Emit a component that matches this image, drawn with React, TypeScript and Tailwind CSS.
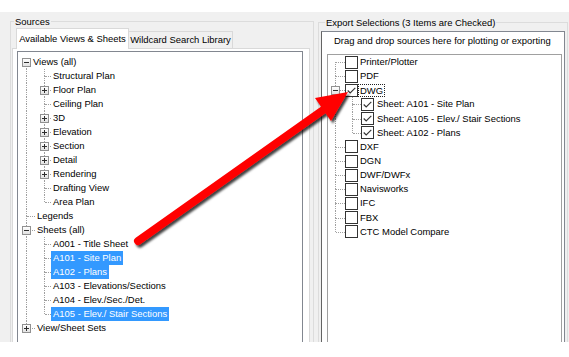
import React from "react";

type LRow = {
  t: string;
  lvl: 0 | 1;
  exp?: "p" | "m";
  sel?: boolean;
  root: "b" | "f" | "t";
  child?: "f" | "t";
  first?: boolean;
};

const LEFT: LRow[] = [
  { t: "Views (all)", lvl: 0, exp: "m", root: "b", first: true },
  { t: "Structural Plan", lvl: 1, root: "f", child: "f" },
  { t: "Floor Plan", lvl: 1, exp: "p", root: "f", child: "f" },
  { t: "Ceiling Plan", lvl: 1, root: "f", child: "f" },
  { t: "3D", lvl: 1, exp: "p", root: "f", child: "f" },
  { t: "Elevation", lvl: 1, exp: "p", root: "f", child: "f" },
  { t: "Section", lvl: 1, exp: "p", root: "f", child: "f" },
  { t: "Detail", lvl: 1, exp: "p", root: "f", child: "f" },
  { t: "Rendering", lvl: 1, exp: "p", root: "f", child: "f" },
  { t: "Drafting View", lvl: 1, root: "f", child: "f" },
  { t: "Area Plan", lvl: 1, root: "f", child: "t" },
  { t: "Legends", lvl: 0, root: "f" },
  { t: "Sheets (all)", lvl: 0, exp: "m", root: "f" },
  { t: "A001 - Title Sheet", lvl: 1, root: "f", child: "f" },
  { t: "A101 - Site Plan", lvl: 1, root: "f", child: "f", sel: true },
  { t: "A102 - Plans", lvl: 1, root: "f", child: "f", sel: true },
  { t: "A103 - Elevations/Sections", lvl: 1, root: "f", child: "f" },
  { t: "A104 - Elev./Sec./Det.", lvl: 1, root: "f", child: "f" },
  { t: "A105 - Elev./ Stair Sections", lvl: 1, root: "f", child: "t", sel: true },
  { t: "View/Sheet Sets", lvl: 0, exp: "p", root: "t" },
];

type RRow = {
  t: string;
  lvl: 0 | 1;
  exp?: boolean;
  checked?: boolean;
  focus?: boolean;
  root: "b" | "f" | "t";
  child?: "f" | "t";
};

const RIGHT: RRow[] = [
  { t: "Printer/Plotter", lvl: 0, root: "b" },
  { t: "PDF", lvl: 0, root: "f" },
  { t: "DWG", lvl: 0, root: "f", exp: true, checked: true, focus: true },
  { t: "Sheet: A101 - Site Plan", lvl: 1, root: "f", child: "f", checked: true },
  { t: "Sheet: A105 - Elev./ Stair Sections", lvl: 1, root: "f", child: "f", checked: true },
  { t: "Sheet: A102 - Plans", lvl: 1, root: "f", child: "t", checked: true },
  { t: "DXF", lvl: 0, root: "f" },
  { t: "DGN", lvl: 0, root: "f" },
  { t: "DWF/DWFx", lvl: 0, root: "f" },
  { t: "Navisworks", lvl: 0, root: "f" },
  { t: "IFC", lvl: 0, root: "f" },
  { t: "FBX", lvl: 0, root: "f" },
  { t: "CTC Model Compare", lvl: 0, root: "t" },
];

const DOT = "border-dotted border-[#a0a0a0]";

function ExpBox({ plus }: { plus?: boolean }) {
  return (
    <span className="flex h-[9px] w-[9px] flex-col items-center justify-center border border-[#919191] bg-gradient-to-b from-[#ffffff] to-[#e2e2e2]">
      <span className="grid">
        <span className="[grid-area:1/1] h-px w-[5px] self-center bg-[#2e2e2e]" />
        {plus && <span className="[grid-area:1/1] h-[5px] w-px justify-self-center bg-[#2e2e2e]" />}
      </span>
    </span>
  );
}

/* One column of tree connector lines, laid out in flow: the vertical line is the
   right border of a fixed-width spacer, the horizontal line is the top border of
   the remaining space in the lower half. An expander box sits on the crossing. */
function Gutter({
  wCls,
  leftCls,
  up,
  down,
  horiz,
  exp,
  plus,
  boxCls,
}: {
  wCls: string;
  leftCls: string;
  up: boolean;
  down: boolean;
  horiz?: boolean;
  exp?: boolean;
  plus?: boolean;
  boxCls?: string;
}) {
  return (
    <div className={`grid h-full shrink-0 ${wCls}`}>
      <div className="[grid-area:1/1] flex flex-col">
        <div className="flex h-1/2">
          <div className={`h-full shrink-0 ${leftCls} ${up ? `border-r ${DOT}` : ""}`} />
        </div>
        <div className="flex h-1/2">
          <div className={`h-full shrink-0 ${leftCls} ${down ? `border-r ${DOT}` : ""}`} />
          {horiz && <div className={`flex-1 border-t ${DOT}`} />}
        </div>
      </div>
      {exp && (
        <div className={`[grid-area:1/1] self-center ${boxCls ?? ""}`}>
          <ExpBox plus={plus} />
        </div>
      )}
    </div>
  );
}

function Cb({ checked }: { checked?: boolean }) {
  return (
    <span className="flex h-[13px] w-[13px] shrink-0 items-center justify-center border border-[#333333] bg-white">
      {checked && (
        <svg width="11" height="11" viewBox="0 0 11 11">
          <path d="M1.7 5.5 L4.2 8 L9.3 2.8" fill="none" stroke="#333333" strokeWidth="1.1" />
        </svg>
      )}
    </span>
  );
}

function LeftTreeRow({ r }: { r: LRow }) {
  return (
    <div className="flex h-[14px] items-center whitespace-nowrap">
      {r.lvl === 0 ? (
        <Gutter
          wCls={r.first ? "w-[13px]" : "w-[17px]"}
          leftCls="w-[9px]"
          up={r.root !== "b"}
          down={r.root !== "t"}
          horiz
          exp={!!r.exp}
          plus={r.exp === "p"}
          boxCls="ml-[4px]"
        />
      ) : (
        <>
          <Gutter wCls="w-[17px]" leftCls="w-[9px]" up down />
          <Gutter
            wCls="w-[16px]"
            leftCls="w-[10px]"
            up
            down={r.child === "f"}
            horiz
            exp={!!r.exp}
            plus={r.exp === "p"}
            boxCls="ml-[5px]"
          />
        </>
      )}
      <span
        className={`flex h-full items-center px-[2px] ${r.sel ? "bg-[#3399ff] text-white" : "text-black"}`}
      >
        {r.t}
      </span>
    </div>
  );
}

function RightTreeRow({ r }: { r: RRow }) {
  return (
    <div className="flex h-[14.15px] items-center whitespace-nowrap">
      {r.lvl === 0 ? (
        <Gutter
          wCls="w-[17px]"
          leftCls="w-[8px]"
          up={r.root !== "b"}
          down={r.root !== "t"}
          horiz
          exp={r.exp}
          plus={false}
          boxCls="ml-[3px]"
        />
      ) : (
        <>
          <Gutter wCls="w-[17px]" leftCls="w-[8px]" up down />
          <Gutter wCls="w-[16px]" leftCls="w-[8px]" up down={r.child === "f"} horiz />
        </>
      )}
      <Cb checked={r.checked} />
      {r.focus ? (
        <span className="border border-dotted border-[#222222] px-[1px] leading-[11px]">{r.t}</span>
      ) : (
        <span className={r.lvl === 0 ? "ml-[2px]" : "ml-[3px]"}>{r.t}</span>
      )}
    </div>
  );
}

function Arrow() {
  return (
    <svg className="pointer-events-none absolute left-0 top-0" width="569" height="357" viewBox="0 0 569 357">
      <defs>
        <filter id="sh" x="-20%" y="-20%" width="140%" height="140%">
          <feDropShadow dx="2" dy="2.5" stdDeviation="1.3" floodColor="#000000" floodOpacity="0.75" />
        </filter>
      </defs>
      <g filter="url(#sh)">
        <line x1="138" y1="241" x2="326" y2="108" stroke="#ff0000" strokeWidth="8" strokeLinecap="round" />
        <polygon points="348,92 315,98 331,121" fill="#ff0000" />
      </g>
    </svg>
  );
}

export default function App() {
  return (
    <div className="relative h-[357px] w-[569px] overflow-hidden bg-white font-['Liberation_Sans',Arial,sans-serif] text-[9.45px] text-black">
      <div className="mt-[12px] flex h-[330px] items-start overflow-hidden bg-[#f0f0f0]">
        {/* Sources group */}
        <fieldset className="ml-[10px] mt-[3px] h-[400px] w-[304px] shrink-0 border border-b-0 border-[#dcdcdc]">
          <legend className="ml-[3px] px-[1px] leading-[13px]">Sources</legend>
          <div className="ml-[1px] w-[298px]">
            <div className="flex h-[20px] items-end pl-[4px]">
              <div className="relative z-10 -mb-px flex h-[21px] w-[113px] items-center justify-center whitespace-nowrap border border-b-0 border-[#d9d9d9] bg-white">
                Available Views &amp; Sheets
              </div>
              <div className="flex h-[17px] w-[104px] items-center justify-center whitespace-nowrap border-r border-t border-[#d9d9d9] bg-[#f0f0f0]">
                Wildcard Search Library
              </div>
            </div>
            <div className="h-[320px] border border-[#d9d9d9] bg-white pl-[4px] pr-[6px] pt-[2px]">
              <div className="flex h-[320px] flex-col border border-[#828790] bg-white pt-[3px]">
                {LEFT.map((r, i) => (
                  <LeftTreeRow key={i} r={r} />
                ))}
              </div>
            </div>
          </div>
        </fieldset>

        {/* Export Selections group */}
        <fieldset className="ml-[4px] mt-[4px] h-[400px] w-[250px] shrink-0 border border-b-0 border-[#dcdcdc]">
          <legend className="ml-[6px] whitespace-nowrap px-[1px] leading-[13px]">
            Export Selections (3 Items are Checked)
          </legend>
          <div className="ml-[2px] mt-[2px] h-[400px] w-[244px] border border-[#828790] border-l-[#646464] bg-white">
            <div className="flex h-[18px] items-center whitespace-nowrap pl-[12px]">
              Drag and drop sources here for plotting or exporting
            </div>
            <div className="ml-[5px] mt-[4px] flex h-[400px] w-[235px] flex-col border border-[#a0a0a0] bg-white">
              {RIGHT.map((r, i) => (
                <RightTreeRow key={i} r={r} />
              ))}
            </div>
          </div>
        </fieldset>
      </div>
      <Arrow />
    </div>
  );
}
